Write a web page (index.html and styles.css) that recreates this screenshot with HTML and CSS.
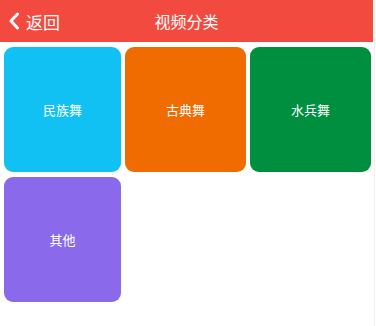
FILE: index.html
```html
<!DOCTYPE html>
<html lang="zh">
<head>
<meta charset="utf-8">
<link rel="stylesheet" href="styles.css">
</head>
<body>
<div class="page">
  <header class="bar">
    <div class="back">
      <svg class="chev" width="12" height="18" viewBox="0 0 12 18"><path d="M9.5 2 L3 9 L9.5 16" fill="none" stroke="#fff" stroke-width="3" stroke-linecap="round" stroke-linejoin="round"/></svg>
      <span>返回</span>
    </div>
    <div class="title">视频分类</div>
  </header>
  <main class="grid">
    <div class="tile blue">民族舞</div>
    <div class="tile orange">古典舞</div>
    <div class="tile green">水兵舞</div>
    <div class="tile purple">其他</div>
  </main>
</div>
</body>
</html>
```
FILE: styles.css
```css
html, body {
  margin: 0;
  padding: 0;
  background: #fff;
}
body {
  font-family: "Noto Sans CJK SC", "Noto Sans", sans-serif;
}
.page {
  width: 374px;
  height: 326px;
  border-right: 1px solid #f0f0f0;
}
.bar {
  position: relative;
  height: 42px;
  background: #f34a3f;
  color: #fff;
  display: flex;
  align-items: center;
  justify-content: center;
  margin-right: 1px;
}
.back {
  position: absolute;
  left: 8px;
  top: 0;
  height: 42px;
  display: flex;
  align-items: center;
  gap: 6px;
  font-size: 17px;
}
.chev {
  display: block;
}
.title {
  font-size: 16px;
}
.grid {
  display: grid;
  grid-template-columns: 117px 121px 121px;
  grid-auto-rows: 125px;
  gap: 5px 4px;
  padding: 5px 4px;
}
.tile {
  border-radius: 9px;
  color: #fff;
  font-size: 13px;
  display: flex;
  align-items: center;
  justify-content: center;
}
.blue { background: #12c1f3; }
.orange { background: #f06b00; }
.green { background: #008f3f; }
.purple { background: #8b69eb; }
```
